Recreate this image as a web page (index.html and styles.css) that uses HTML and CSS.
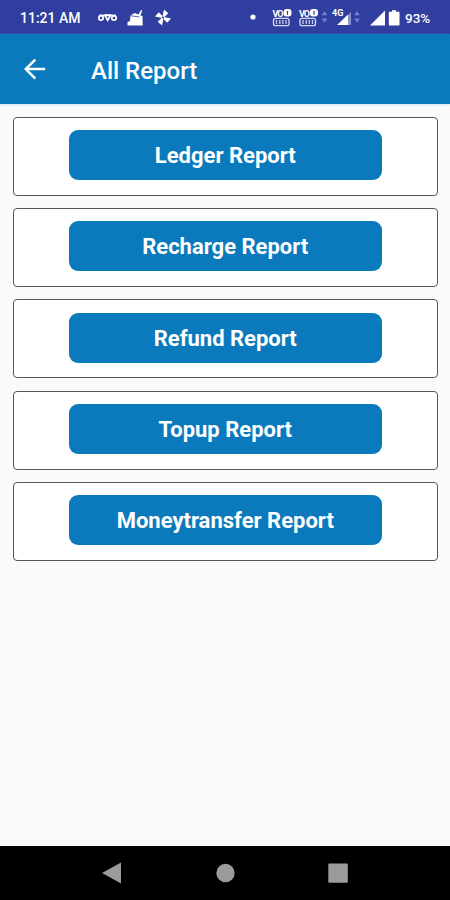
FILE: index.html
```
<!DOCTYPE html>
<html lang="en">
<head>
<meta charset="utf-8">
<title>All Report</title>
<link rel="stylesheet" href="styles.css">
</head>
<body>
<div class="screen">
  <div class="status">
    <span class="time">11:21 AM</span>
    <svg class="notices" width="80" height="34" viewBox="95 0 80 34">
      <g fill="none" stroke="#fff" stroke-width="1.7">
        <circle cx="101" cy="18" r="2.2"/>
        <path d="M104.5 15.2h6.5M105 15.5l2.7 4.7 2.7-4.7"/>
        <circle cx="114" cy="18" r="2.2"/>
        <path d="M99 15.4h17"/>
      </g>
      <path fill="#fff" d="M127.500 25.500v-3.500l2.500-1 .5-5.500 4-2.500 4 1.500 2.500-4.500 1.200.6-1.800 4.900 2.100.5.2 9.500z"/>
      <path stroke="#303f9f" stroke-width=".8" fill="none" d="M131 15.800l8.500 1.200"/>
      <g fill="#fff" transform="rotate(12 163 17.500)">
        <path id="blade" d="M162.300 16.500v-7l5 2.700-3 4.500z"/>
        <use href="#blade" transform="rotate(90 163 17.500)"/>
        <use href="#blade" transform="rotate(180 163 17.500)"/>
        <use href="#blade" transform="rotate(270 163 17.500)"/>
      </g>
    </svg>
    <svg class="signals" width="156" height="34" viewBox="246 0 156 34">
      <circle cx="253" cy="17" r="2.600" fill="#fff"/>
      <g id="volte">
        <text class="tiny" x="272.500" y="16.500" textLength="11">VO</text>
        <rect x="283.500" y="9" width="8" height="7.500" rx="3" fill="#fff"/>
        <path d="M287.500 10.800v4" stroke="#303f9f" stroke-width="1.200"/>
        <rect x="273.500" y="18.300" width="15.500" height="7.400" rx="2" fill="none" stroke="#d5d8f0" stroke-width="1.300"/>
        <path d="M276.500 20v4M279.800 20v4M282.800 20v4M286 20v4" stroke="#c5cae9" stroke-width="1.300"/>
      </g>
      <use href="#volte" x="26.500"/>
      <g fill="#7580c5">
        <path id="arrows" d="M321.800 15.200l2.700-4.200 2.700 4.200zM321.800 18.500l2.700 4.200 2.700-4.200z"/>
        <use href="#arrows" x="32.500"/>
      </g>
      <text class="tiny" x="332" y="16" textLength="11.500">4G</text>
      <path fill="#8790ca" d="M345 18v7h6V12z"/>
      <path fill="#fff" d="M337 25l11-10.500V25z"/>
      <path fill="#fff" d="M370 25.500l15-15v15z"/>
      <path fill="#fff" d="M392 10.300h4v1.500h2.800q.7 0 .7.700v12.300q0 .7-.7.700h-9.300q-.7 0-.7-.7V12.500q0-.7.700-.7h2.500z"/>
    </svg>
    <span class="battery">93%</span>
  </div>
  <header class="appbar">
    <svg class="back" width="24" height="24" viewBox="0 0 24 24"><path d="M22.200 12.100H2.700M12.300 2.600L2.800 12.100l9.500 9.500" fill="none" stroke="#fff" stroke-width="2.500"/></svg>
    <h1>All Report</h1>
  </header>
  <main class="list">
    <div class="card"><button><span class="w1">Ledger Report</span></button></div>
    <div class="card"><button>Recharge Report</button></div>
    <div class="card"><button>Refund Report</button></div>
    <div class="card"><button>Topup Report</button></div>
    <div class="card"><button>Moneytransfer Report</button></div>
  </main>
  <nav class="navbar">
    <svg width="450" height="54" viewBox="0 846 450 54">
      <g fill="#9b9b9b">
        <path d="M102 873l19-10.500v21z"/>
        <circle cx="225.500" cy="873" r="9.200"/>
        <rect x="328.300" y="863.500" width="19.500" height="19.300" rx="1"/>
      </g>
    </svg>
  </nav>
</div>
</body>
</html>
```
FILE: styles.css
```
* { box-sizing: border-box; }
body { margin: 0; font-family: Roboto, "Liberation Sans", sans-serif; }
.screen {
  width: 450px;
  height: 900px;
  display: flex;
  flex-direction: column;
  background: #fafafa;
  overflow: hidden;
}
.status {
  height: 34px;
  flex: none;
  display: flex;
  align-items: center;
  padding: 0 0 0 20px;
  background: #303f9f;
  color: #fff;
  font-size: 14px;
  font-weight: 500;
  white-space: nowrap;
}
.status svg { flex: none; }
.time { width: 75px; padding-top: 2px; }
.signals { margin-left: 71px; }
.battery { margin-left: 3px; padding-top: 2px; font-size: 13.500px; }
.tiny { font-size: 9px; font-weight: 700; fill: #fff; }
.appbar {
  height: 70px;
  flex: none;
  display: flex;
  align-items: center;
  padding-left: 23px;
  background: #0a7abc;
  color: #fff;
  box-shadow: 0 1px 2px #cfe3ee;
}
.appbar h1 {
  margin: 3px 0 0 44px;
  font-size: 24px;
  line-height: 30px;
  font-weight: 500;
}
.list {
  flex: 1;
  padding: 12.500px 12px 0 12.500px;
  display: flex;
  flex-direction: column;
  gap: 12.350px;
}
.card {
  height: 79px;
  flex: none;
  padding-top: 12.500px;
  border: 1.500px solid #555;
  border-radius: 4px;
  background: #fff;
  display: flex;
  justify-content: center;
  align-items: flex-start;
}
.card button {
  width: 313px;
  height: 50px;
  padding: 2px 0 0;
  border: 0;
  border-radius: 9px;
  background: #0a7abc;
  color: #fff;
  font: 700 22px/28px Roboto, "Liberation Sans", sans-serif;
}
.navbar { height: 54px; flex: none; background: #000; }
.navbar svg { display: block; }
```
